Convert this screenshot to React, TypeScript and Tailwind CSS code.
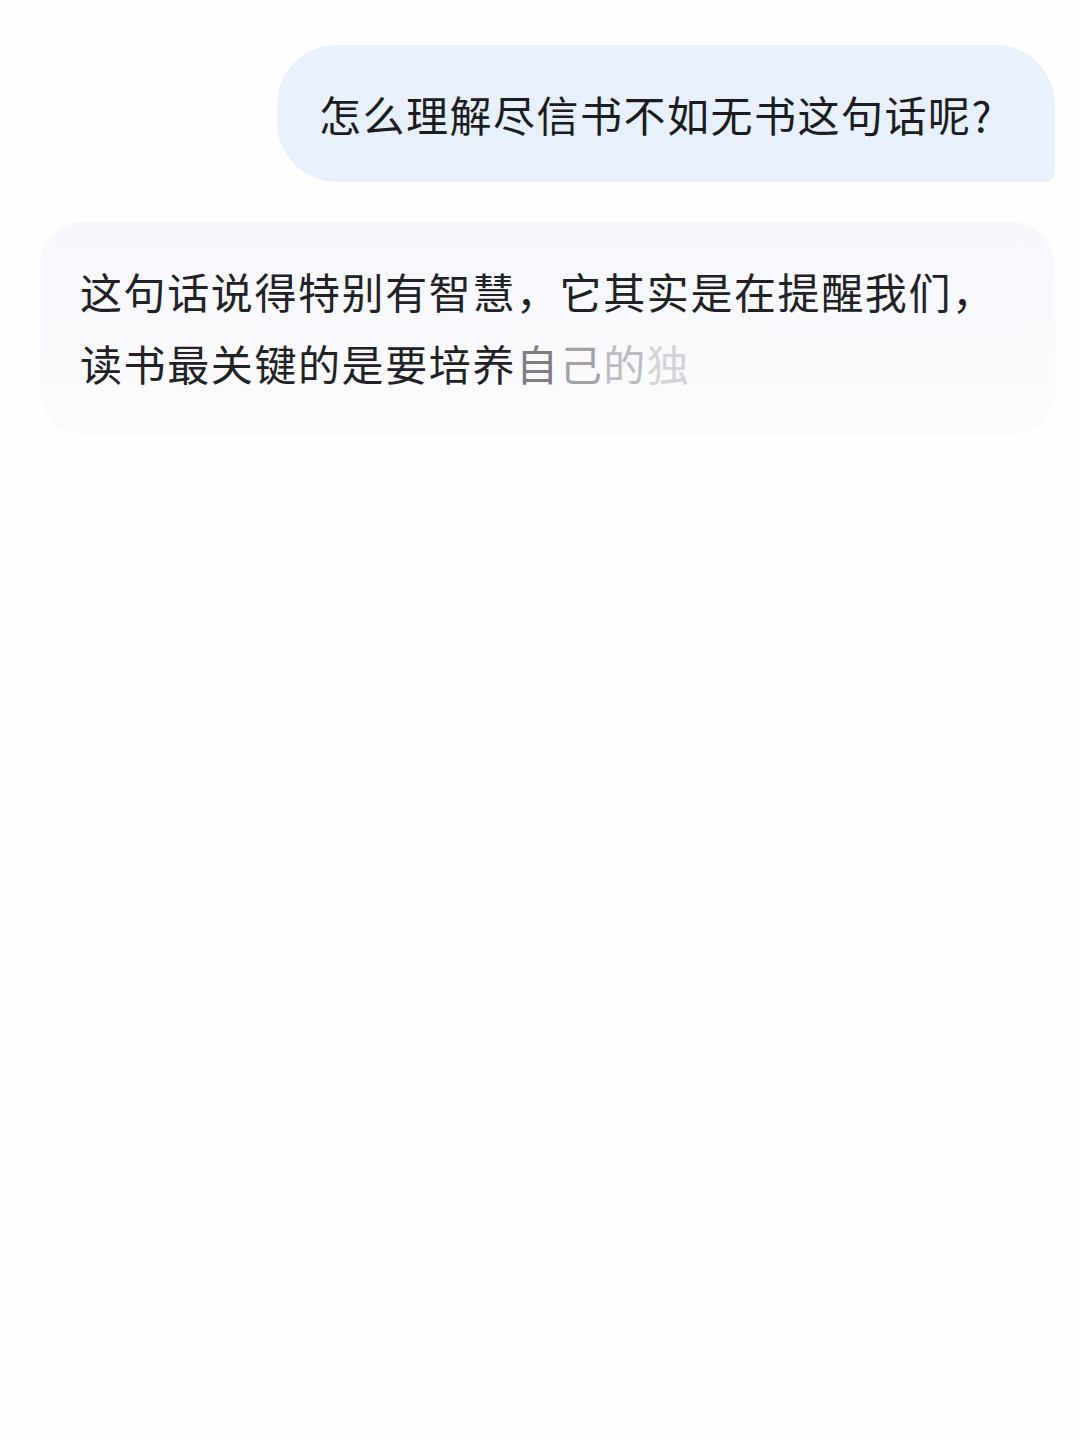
export default function App() {
  return (
    <div
      className="min-h-[1440px] w-[1080px] bg-[#fefefe] pt-[45px]"
      style={{ fontFamily: '"Noto Sans CJK SC", "Noto Sans", sans-serif' }}
    >
      <div className="flex justify-end pr-[25px]">
        <div className="flex h-[137px] items-center rounded-[60px] rounded-br-[10px] bg-[#e7f0fb] pl-[42px] pr-[62px] text-[42px] tracking-[1.5px] text-[#1c1c1e]">
          怎么理解尽信书不如无书这句话呢?
        </div>
      </div>

      <div className="ml-[40px] mr-[25px] mt-[40px] rounded-[44px] bg-gradient-to-b from-[#f6f7fb] to-[#fbfbfd] pb-[36px] pl-[40px] pt-[33px] text-[42px] leading-[72px] tracking-[1.6px] text-[#222226]">
        <div>这句话说得特别有智慧，它其实是在提醒我们，</div>
        <div>
          读书最关键的是要培养
          <span className="text-[#7e7e82]">自</span>
          <span className="text-[#a2a2a6]">己</span>
          <span className="text-[#bdbdc1]">的</span>
          <span className="text-[#d3d3d7]">独</span>
        </div>
      </div>
    </div>
  );
}
